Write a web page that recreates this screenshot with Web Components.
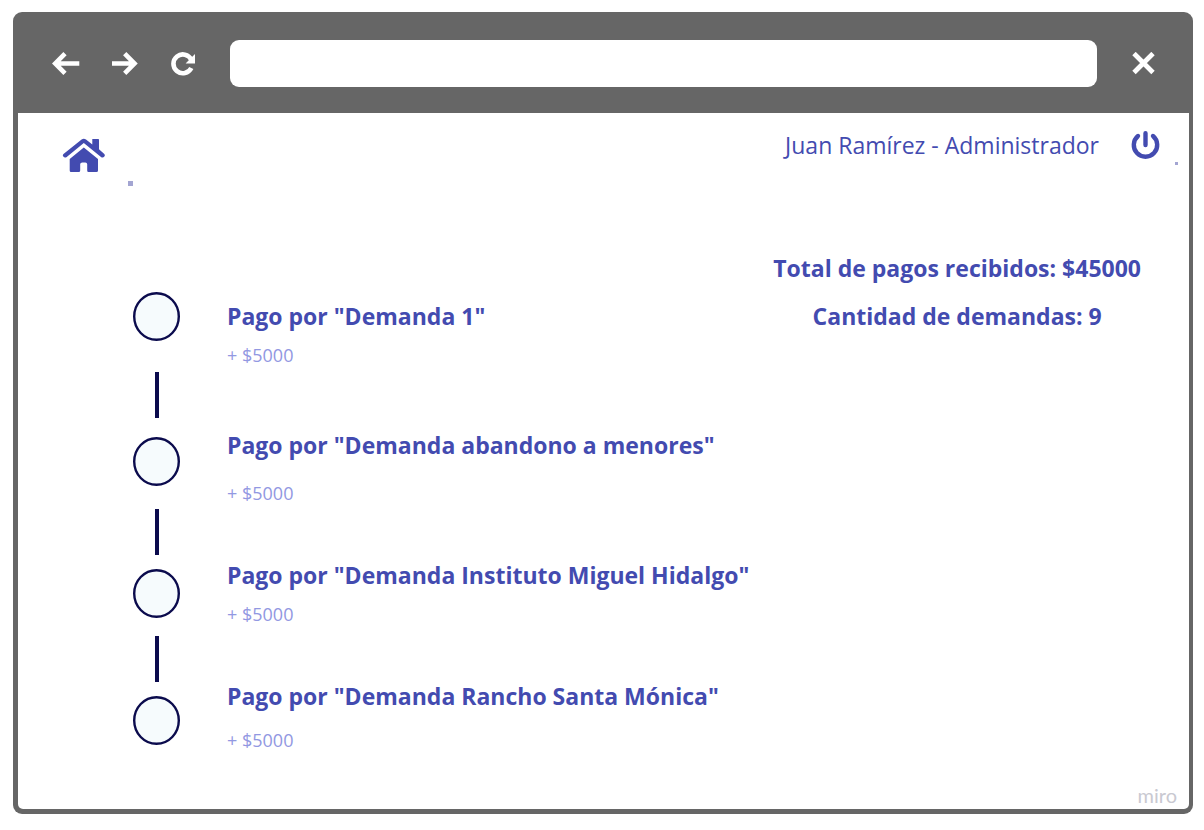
<!DOCTYPE html>
<html lang="es">
<head>
<meta charset="utf-8">
<meta name="viewport" content="width=device-width, initial-scale=1">
<title>Pagos recibidos</title>
<style>
  html, body { margin: 0; background: #fff; }
  body {
    box-sizing: border-box;
    min-height: 100vh;
    padding: 12px 11px 16px 13px;
    display: flex;
    flex-direction: column;
    font-family: "Open Sans", "Noto Sans", sans-serif;
    color: #434bb0;
    --ink: #434bb0;
    --soft: #9298e2;
    --navy: #0b0b4d;
    --chrome: #666;
  }
</style>
</head>
<body>
<browser-window>
  <app-header slot="page" user="Juan Ramírez - Administrador"></app-header>
  <payments-view slot="page">
    <timeline-rail slot="rail"></timeline-rail>
    <payment-entry slot="entry" amount="+ $5000">Pago por "Demanda 1"</payment-entry>
    <payment-entry slot="entry" amount="+ $5000" spacing="loose">Pago por "Demanda abandono a menores"</payment-entry>
    <payment-entry slot="entry" amount="+ $5000">Pago por "Demanda Instituto Miguel Hidalgo"</payment-entry>
    <payment-entry slot="entry" amount="+ $5000" spacing="medium">Pago por "Demanda Rancho Santa Mónica"</payment-entry>
    <payment-summary slot="summary" total="$45000" count="9"></payment-summary>
  </payments-view>
  <brand-mark slot="page">miro</brand-mark>
</browser-window>

<script>
  class BaseElement extends HTMLElement {
    connectedCallback() {
      if (this.shadowRoot) return;
      this.attachShadow({ mode: "open" }).innerHTML = this.render();
    }
  }

  customElements.define("browser-window", class extends BaseElement {
    render() {
      return `
      <style>
        :host { flex: 1; display: flex; flex-direction: column; background: var(--chrome); border-radius: 9px; padding: 0 4px 5px 5px; }
        nav { display: flex; align-items: center; padding: 28px 34px 26px 34px; }
        button { border: 0; padding: 0; background: none; display: block; cursor: pointer; }
        svg { display: block; }
        .tools { display: flex; gap: 31px; margin-right: 34px; }
        input { flex: 1; min-width: 0; height: 47px; box-sizing: border-box; border: 0; border-radius: 9px; background: #fff; padding: 0 16px; font: 20px "Open Sans", sans-serif; color: #333; }
        .close { margin-left: 35px; }
        .page { flex: 1; display: flex; flex-direction: column; background: #fff; border-radius: 0 0 5px 5px; }
      </style>
      <nav aria-label="Navegador">
        <div class="tools">
          <button aria-label="Atrás"><svg width="28" height="24" viewBox="0 0.500 28 24"><path d="M27.300 12H4M13 2.200L3.200 12L13 21.800" fill="none" stroke="#fff" stroke-width="4.600"/></svg></button>
          <button aria-label="Adelante"><svg width="28" height="24" viewBox="0 0.500 28 24"><path d="M1 12H23M13.700 2.200L23.500 12L13.700 21.800" fill="none" stroke="#fff" stroke-width="4.600"/></svg></button>
          <button aria-label="Recargar"><svg width="26" height="24" viewBox="0 0.500 26 24"><path d="M21.300 16.400A9.400 9.400 0 1 1 21.300 8.200" fill="none" stroke="#fff" stroke-width="4.600"/><path d="M25 2.600V12H15.600Z" fill="#fff"/></svg></button>
        </div>
        <input type="text" aria-label="Dirección">
        <button class="close" aria-label="Cerrar"><svg width="23" height="24" viewBox="0 1 23 24"><path d="M2 2.500L21 21.500M21 2.500L2 21.500" stroke="#fff" stroke-width="4.800"/></svg></button>
      </nav>
      <div class="page"><slot name="page"></slot></div>`;
    }
  });

  customElements.define("app-header", class extends BaseElement {
    render() {
      return `
      <style>
        :host { display: block; }
        header { display: flex; align-items: flex-start; height: 73px; padding: 0 11px 0 44px; }
        a, button { display: block; color: var(--ink); border: 0; padding: 0; background: none; cursor: pointer; }
        svg { display: block; }
        a { margin-top: 25px; }
        .dot { width: 5px; height: 5px; background: #a3a5d2; }
        .home-dot { align-self: flex-end; margin-left: 23px; }
        .user { display: flex; align-items: center; margin: 16px 0 0 auto; }
        .name { font-size: 23px; line-height: 32px; }
        button { margin-left: 32px; }
        .end-dot { width: 3px; height: 3px; margin: 49px 0 0 15px; }
      </style>
      <header>
        <a href="#inicio" aria-label="Inicio"><svg width="43" height="35" viewBox="0 0 43 35" fill="currentColor"><path d="M30.300 1H36.300Q37 1 37 1.700V11.300L42.300 16Q43.400 17.300 42.300 18.600Q41 20.200 39.300 19.200L21.800 5L4.400 19.200Q2.700 20.200 1.300 18.600Q.2 17.200 1.500 16L19.600 1.500Q21.800.2 24 1.500L30.300 6.600Z"/><path d="M21.800 9.500L36 21V32.500Q36 34 34.500 34H26.500Q25.200 34 25.200 32.500V26.300Q25.200 24.400 23.300 24.400H20.300Q18.200 24.400 18.200 26.300V32.500Q18.200 34 16.700 34H9Q7.700 34 7.700 32.500V21Z"/></svg></a>
        <span class="dot home-dot"></span>
        <div class="user">
          <span class="name">${this.getAttribute("user")}</span>
          <button aria-label="Cerrar sesión"><svg width="29" height="30" viewBox="0 0 29 30" fill="none" stroke="currentColor" stroke-width="4.400" stroke-linecap="round"><path d="M14.500 3.200V15M7 6A11.700 11.700 0 1 0 22 6"/></svg></button>
        </div>
        <span class="dot end-dot"></span>
      </header>`;
    }
  });

  customElements.define("payments-view", class extends BaseElement {
    render() {
      return `
      <style>
        :host { flex: 1; display: block; }
        main { display: grid; grid-template-columns: 47px minmax(0, 1fr) max-content; padding: 66px 48px 0 115px; }
        .rail { padding-top: 40px; }
        .entries { padding: 48px 0 0 47px; display: flex; flex-direction: column; gap: 54px; }
        ::slotted(payment-entry:first-of-type) { margin-bottom: 8px; }
      </style>
      <main>
        <div class="rail"><slot name="rail"></slot></div>
        <div class="entries"><slot name="entry"></slot></div>
        <aside><slot name="summary"></slot></aside>
      </main>`;
    }
  });

  customElements.define("timeline-rail", class extends BaseElement {
    render() {
      const node = `<svg width="47" height="49" viewBox="0 0 47 49"><ellipse cx="23.500" cy="24.500" rx="22.300" ry="23.300" fill="#f6fbfd" stroke="#0b0b4d" stroke-width="2.400"/></svg>`;
      return `
      <style>
        :host { display: flex; flex-direction: column; align-items: center; }
        svg { display: block; }
        .link { width: 4px; height: 46px; margin: 18px 0 14px; background: var(--navy); }
        .first { margin: 31px 0 19px; }
        .second { margin-top: 23px; }
      </style>
      ${node}<div class="link first"></div>
      ${node}<div class="link second"></div>
      ${node}<div class="link"></div>
      ${node}`;
    }
  });

  customElements.define("payment-entry", class extends BaseElement {
    render() {
      return `
      <style>
        :host { display: flex; flex-direction: column; gap: 11px; }
        :host([spacing="medium"]) { gap: 16px; }
        :host([spacing="loose"]) { gap: 20px; }
        h2 { margin: 0; font-size: 23px; line-height: 32px; font-weight: 700; white-space: nowrap; }
        p { margin: 0; font-size: 18px; line-height: 24px; color: var(--soft); }
      </style>
      <h2><slot></slot></h2>
      <p>${this.getAttribute("amount")}</p>`;
    }
  });

  customElements.define("payment-summary", class extends BaseElement {
    render() {
      return `
      <style>
        :host { display: flex; flex-direction: column; gap: 16px; text-align: center; font-size: 23px; line-height: 32px; font-weight: 700; }
        p { margin: 0; }
      </style>
      <p>Total de pagos recibidos: ${this.getAttribute("total")}</p>
      <p>Cantidad de demandas: ${this.getAttribute("count")}</p>`;
    }
  });

  customElements.define("brand-mark", class extends BaseElement {
    render() {
      return `
      <style>
        :host { display: block; text-align: right; padding: 0 12px 2px 0; font: 20px/24px Lato, sans-serif; color: #c9c9d1; }
      </style>
      <slot></slot>`;
    }
  });
</script>
</body>
</html>
